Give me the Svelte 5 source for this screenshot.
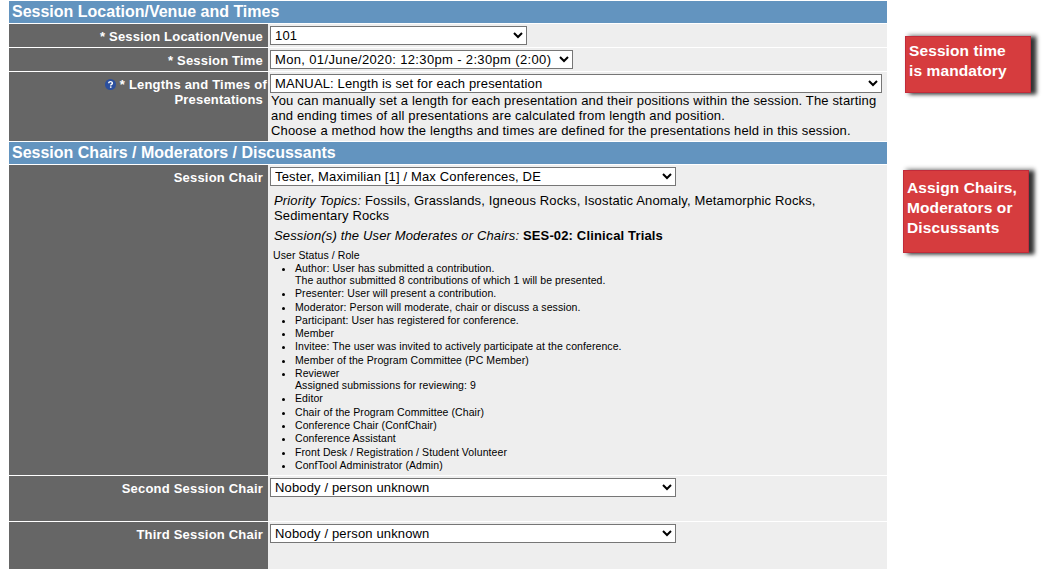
<script>
  const roles = [
    ["Author: User has submitted a contribution.", "The author submitted 8 contributions of which 1 will be presented."],
    ["Presenter: User will present a contribution."],
    ["Moderator: Person will moderate, chair or discuss a session."],
    ["Participant: User has registered for conference."],
    ["Member"],
    ["Invitee: The user was invited to actively participate at the conference."],
    ["Member of the Program Committee (PC Member)"],
    ["Reviewer", "Assigned submissions for reviewing: 9"],
    ["Editor"],
    ["Chair of the Program Committee (Chair)"],
    ["Conference Chair (ConfChair)"],
    ["Conference Assistant"],
    ["Front Desk / Registration / Student Volunteer"],
    ["ConfTool Administrator (Admin)"]
  ];
</script>

<div class="page">
  <div class="form">
    <h2 class="head">Session Location/Venue and Times</h2>
    <div class="row">
      <div class="label">* Session Location/Venue</div>
      <div class="cell"><select class="venue"><option>101</option></select></div>
    </div>
    <div class="row">
      <div class="label">* Session Time</div>
      <div class="cell"><select class="time"><option>Mon, 01/June/2020: 12:30pm - 2:30pm (2:00)</option></select></div>
    </div>
    <div class="row tall">
      <div class="label lengths">
        <svg class="help" viewBox="0 0 10 10" width="11" height="11">
          <circle cx="5" cy="5" r="5" fill="#2b4f9e" />
          <path d="M3.4 3.9C3.4 2.9 4.1 2.4 5 2.4S6.7 2.9 6.7 3.8C6.7 4.9 5.2 4.9 5.2 6" fill="none" stroke="#fff" stroke-width="1.3" />
          <rect x="4.5" y="6.7" width="1.4" height="1.3" fill="#fff" />
        </svg>
        * Lengths and Times of <span class="pad">Presentations</span>
      </div>
      <div class="cell">
        <select class="method"><option>MANUAL: Length is set for each presentation</option></select>
        <p class="note">You can manually set a length for each presentation and their positions within the session. The starting and ending times of all presentations are calculated from length and position.<br />Choose a method how the lengths and times are defined for the presentations held in this session.</p>
      </div>
    </div>
    <h2 class="head">Session Chairs / Moderators / Discussants</h2>
    <div class="row">
      <div class="label">Session Chair</div>
      <div class="cell chair">
        <select class="person"><option>Tester, Maximilian [1] / Max Conferences, DE</option></select>
        <p class="topics"><em>Priority Topics:</em> Fossils, Grasslands, Igneous Rocks, Isostatic Anomaly, Metamorphic Rocks, Sedimentary Rocks</p>
        <p class="topics moderates"><em>Session(s) the User Moderates or Chairs:</em> <b>SES-02: Clinical Trials</b></p>
        <div class="status">User Status / Role</div>
        <ul>
          {#each roles as role}
            <li>
              {#each role as line, i}
                {#if i > 0}<br />{/if}{line}
              {/each}
            </li>
          {/each}
        </ul>
      </div>
    </div>
    <div class="row extra">
      <div class="label">Second Session Chair</div>
      <div class="cell"><select class="person"><option>Nobody / person unknown</option></select></div>
    </div>
    <div class="row extra last">
      <div class="label">Third Session Chair</div>
      <div class="cell"><select class="person"><option>Nobody / person unknown</option></select></div>
    </div>
  </div>

  <div class="callout one">Session time<br />is mandatory</div>
  <div class="callout two">Assign Chairs,<br />Moderators or<br />Discussants</div>
</div>

<style>
  :global(body) {
    margin: 0;
    background: #fff;
  }

  .page {
    position: relative;
    height: 569px;
    overflow: hidden;
    font-family: "Liberation Sans", Arial, sans-serif;
    color: #000;
  }

  .form {
    width: 878px;
    margin-left: 9px;
    padding-top: 1px;
  }

  .head {
    margin: 0 0 1px;
    height: 22px;
    padding-left: 3px;
    background: #6394bf;
    color: #fff;
    font-size: 16px;
    font-weight: bold;
    line-height: 21px;
  }

  .row {
    display: grid;
    grid-template-columns: 259px 1fr;
    min-height: 23px;
    margin-bottom: 1px;
    background: #eee;
  }

  .row.tall {
    height: 69px;
    margin-bottom: 1px;
  }

  .row.extra {
    height: 45px;
  }

  .row.last {
    height: 48px;
    margin-bottom: 0;
  }

  .label {
    padding: 5px 5px 0 0;
    background: #666;
    color: #fff;
    font-size: 13px;
    font-weight: bold;
    letter-spacing: 0.2px;
    line-height: 15px;
    text-align: right;
  }

  .lengths {
    padding-right: 1px;
  }

  .pad {
    padding-right: 4px;
  }

  .help {
    vertical-align: -1px;
  }

  .cell {
    padding: 2px 0 0 2px;
    font-size: 13px;
    letter-spacing: 0.15px;
  }

  select {
    display: block;
    height: 19px;
    padding: 0;
    box-sizing: border-box;
    border: 1px solid #767676;
    border-radius: 0;
    background-color: #fff;
    font-family: inherit;
    font-size: 13px;
    letter-spacing: 0.15px;
    color: #000;
  }

  .venue { width: 257px; }
  .time { width: 303px; letter-spacing: 0.35px; }
  .method { width: 612px; }
  .person { width: 406px; }

  .note {
    margin: 0 0 0 1px;
    width: 610px;
    line-height: 15px;
  }

  .chair {
    height: 308px;
  }

  .topics {
    margin: 7px 0 0 4px;
    line-height: 15px;
    width: 590px;
  }

  .moderates {
    margin-top: 5px;
  }

  .status {
    margin: 6px 0 0 3px;
    font-size: 10.5px;
    letter-spacing: 0.08px;
    line-height: 13px;
  }

  ul {
    margin: 0;
    padding-left: 25px;
    font-size: 10.5px;
    letter-spacing: 0.08px;
    line-height: 12px;
  }

  li {
    margin-bottom: 1.3px;
  }

  .callout {
    position: absolute;
    box-sizing: border-box;
    padding: 4px 0 0 3px;
    background: #d63c3e;
    border: 1px solid #c12b3a;
    color: #fff;
    font-size: 15.5px;
    font-weight: bold;
    line-height: 20px;
    letter-spacing: 0.1px;
    box-shadow: 5px 1px 4px #333, 4px 0 4px 2px #ccc;
  }

  .one {
    left: 905px;
    top: 36px;
    width: 126px;
    height: 57px;
  }

  .two {
    left: 903px;
    top: 170px;
    width: 126px;
    height: 83px;
    padding-top: 7px;
  }
</style>
